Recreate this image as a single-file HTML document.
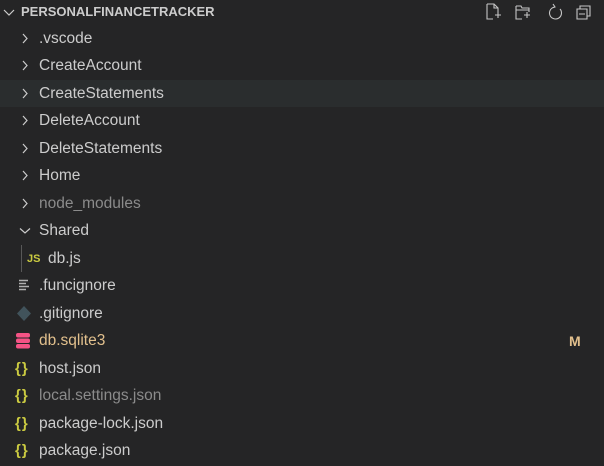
<!DOCTYPE html>
<html><head><style>
body{margin:0;width:604px;height:462px;background:#252526;overflow:hidden;font-family:"Liberation Sans",sans-serif;color:#cccccc}
.hdr{position:absolute;top:0;left:0;width:604px;height:24px;font-weight:bold;font-size:13px;line-height:24px}
.row{position:absolute;left:0;width:604px;height:27.5px;line-height:28.5px;font-size:15.5px}
.row .t{position:absolute;left:39px}
.ch{position:absolute;left:19px;top:0}
.dim{color:#8b8b8b}
.mod{color:#e2c08d}
.ic{position:absolute;left:16px;top:0}
.br{position:absolute;left:15px;color:#cbcb41;font-weight:bold;font-size:15px;letter-spacing:1px}
</style></head><body>
<div class="hdr"><svg style="position:absolute;left:2px;top:5px" width="14" height="14"><path d="M2 5l5 5 5-5" stroke="#ccc" stroke-width="1.2" fill="none"/></svg><span style="position:absolute;left:21px">PERSONALFINANCETRACKER</span>
<svg style="position:absolute;left:485px;top:3px" width="115" height="18" fill="none" stroke="#c5c5c5" stroke-width="1.1">
<path d="M2 1h7l4 4v4M2 1v15h6M9 1v4h4M10 12h6M13 9v6"/>
<path d="M31 3h5l1 2h7v4M31 3v13h6M31 7h13M39 12h6M42 9v6"/>
<path d="M70 4a6 6 0 1 0 5 2M68 1l2 3-3 1"/>
<path d="M92 6h10v10H92zM95 6V3h10v10h-3M94 11h6"/>
</svg></div>
<div class="row" style="top:24.5px"><svg class="ch" width="12" height="27"><path d="M4 9l4 4.5-4 4.5" stroke="#ccc" stroke-width="1.2" fill="none"/></svg><span class="t">.vscode</span></div>
<div class="row" style="top:52px"><svg class="ch" width="12" height="27"><path d="M4 9l4 4.5-4 4.5" stroke="#ccc" stroke-width="1.2" fill="none"/></svg><span class="t">CreateAccount</span></div>
<div class="row" style="top:79.5px;background:#2a2d2e"><svg class="ch" width="12" height="27"><path d="M4 9l4 4.5-4 4.5" stroke="#ccc" stroke-width="1.2" fill="none"/></svg><span class="t">CreateStatements</span></div>
<div class="row" style="top:107px"><svg class="ch" width="12" height="27"><path d="M4 9l4 4.5-4 4.5" stroke="#ccc" stroke-width="1.2" fill="none"/></svg><span class="t">DeleteAccount</span></div>
<div class="row" style="top:134.5px"><svg class="ch" width="12" height="27"><path d="M4 9l4 4.5-4 4.5" stroke="#ccc" stroke-width="1.2" fill="none"/></svg><span class="t">DeleteStatements</span></div>
<div class="row" style="top:162px"><svg class="ch" width="12" height="27"><path d="M4 9l4 4.5-4 4.5" stroke="#ccc" stroke-width="1.2" fill="none"/></svg><span class="t">Home</span></div>
<div class="row" style="top:189.5px"><svg class="ch" width="12" height="27"><path d="M4 9l4 4.5-4 4.5" stroke="#ccc" stroke-width="1.2" fill="none"/></svg><span class="t dim">node_modules</span></div>
<div class="row" style="top:217px"><svg class="ch" width="14" height="27"><path d="M1 11.5l5 4.5 5-4.5" stroke="#ccc" stroke-width="1.2" fill="none"/></svg><span class="t">Shared</span></div>
<div class="row" style="top:244.5px"><div style="position:absolute;left:21px;top:0;width:1px;height:27.5px;background:#585858"></div><span style="position:absolute;left:27px;font-size:11px;font-weight:bold;color:#cbcb41">JS</span><span class="t" style="left:48px">db.js</span></div>
<div class="row" style="top:272px"><svg class="ic" width="16" height="27"><path d="M3 8.5h9M3 11.5h7M3 14.5h10M3 17.5h7" stroke="#b0b0b0" stroke-width="1.4"/></svg><span class="t">.funcignore</span></div>
<div class="row" style="top:299.5px"><svg class="ic" width="18" height="27"><path d="M8 6l7 7.5-7 7.5-7-7.5z" fill="#41535b"/></svg><span class="t">.gitignore</span></div>
<div class="row" style="top:327px"><svg class="ic" width="16" height="27"><rect x="0" y="6" width="14" height="4.5" rx="2" fill="#f55385"/><rect x="0" y="11.5" width="14" height="4.5" rx="2" fill="#f55385"/><rect x="0" y="17" width="14" height="4.5" rx="2" fill="#f55385"/></svg><span class="t mod">db.sqlite3</span><span class="mod" style="position:absolute;left:569px;font-weight:bold;font-size:14px">M</span></div>
<div class="row" style="top:354.5px"><span class="br">{}</span><span class="t">host.json</span></div>
<div class="row" style="top:382px"><span class="br">{}</span><span class="t dim">local.settings.json</span></div>
<div class="row" style="top:409.5px"><span class="br">{}</span><span class="t">package-lock.json</span></div>
<div class="row" style="top:437px"><span class="br">{}</span><span class="t">package.json</span></div>
</body></html>
